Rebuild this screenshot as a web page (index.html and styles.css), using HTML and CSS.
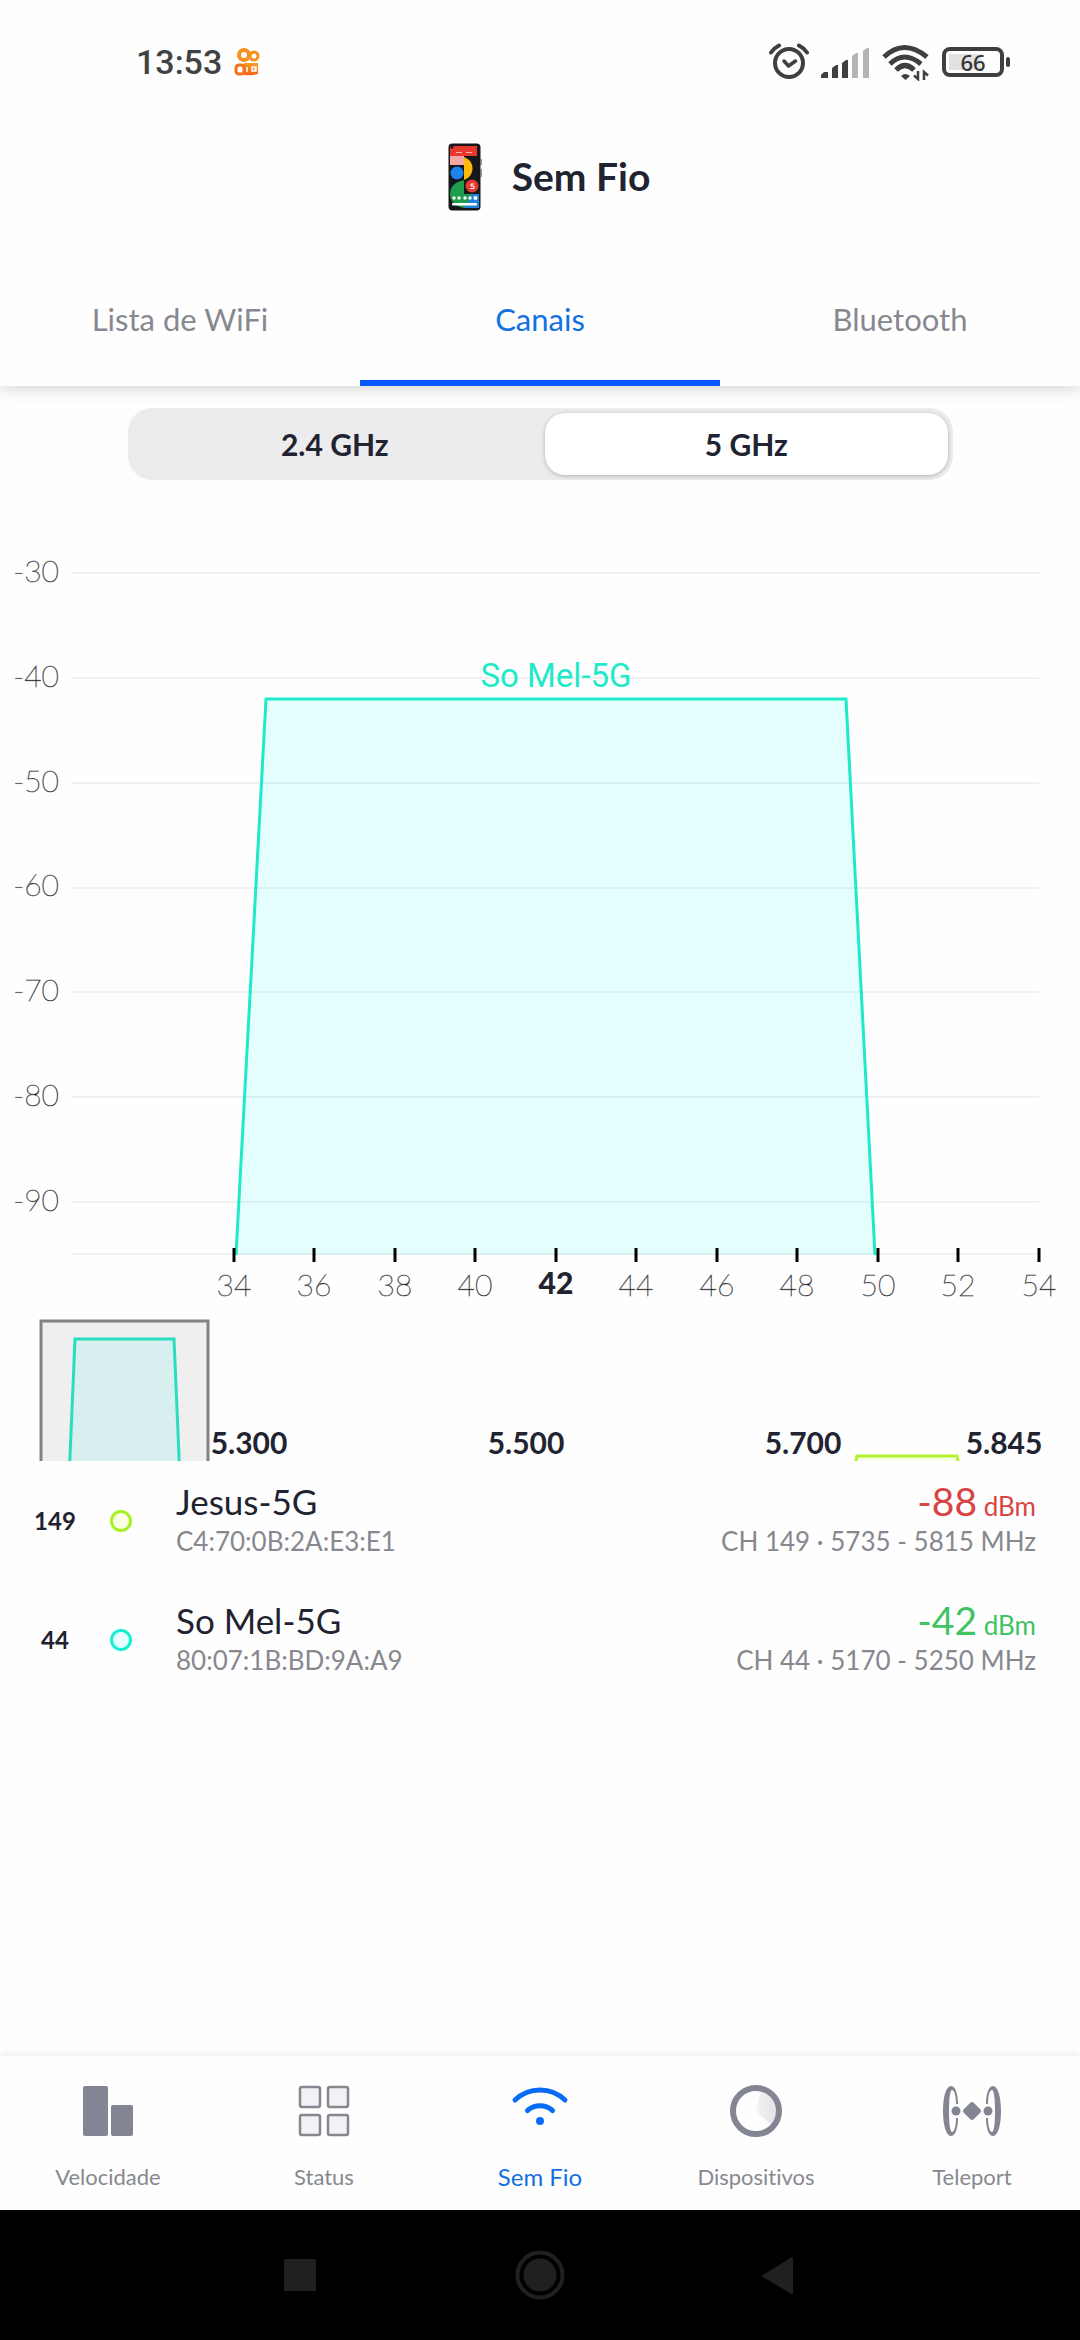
FILE: index.html
```html
<!DOCTYPE html>
<html lang="pt-BR">
<head>
    <meta charset="UTF-8" />
    <meta name="viewport" content="width=device-width, initial-scale=1" />
    <title>Sem Fio</title>
    <link rel="stylesheet" href="styles.css">
</head>
<body>
    <div class="status-bar">
        <span class="clock">13:53</span>
        <svg class="notif" width="26" height="28" viewBox="0 0 26 28">
            <defs>
                <linearGradient id="orange" x1="0" y1="0" x2="0" y2="1">
                    <stop offset="0" stop-color="#f99a1c" />
                    <stop offset="1" stop-color="#f4621b" />
                </linearGradient>
            </defs>
            <g fill="none" stroke="#f7901e">
                <circle cx="10" cy="7" r="5" stroke-width="4" />
                <circle cx="20" cy="8" r="4" stroke-width="3" />
            </g>
            <path d="M10 15h14v11q-8 2-14 1z" fill="url(#orange)" />
            <rect x="2" y="17" width="8" height="9" rx="3" fill="#fff" stroke="#f4701b" stroke-width="3" />
            <path d="M13 19v5M23 19h-5v4h4v-2h-2" fill="none" stroke="#fff" stroke-width="1.500" />
        </svg>
        <div class="status-icons">
            <svg width="40" height="38" viewBox="0 0 40 38" fill="none" stroke="#3f3f3f">
                <circle cx="20" cy="20" r="14" stroke-width="4" />
                <path d="M15 18l4.500 5 7-5" stroke-width="3.500" stroke-linecap="round" stroke-linejoin="round" />
                <path d="M2 9.500q3-4.500 8-7M38 9.500q-3-4.500-8-7" stroke-width="4" stroke-linecap="round" />
            </svg>
            <svg width="49" height="38" viewBox="0 0 49 38">
                <g fill="#3f3f3f">
                    <path d="M0 35v-3l3-3h4v6zM11 35V25l4-3h2v13zM21 35V20l4-3h2v18z" />
                </g>
                <path d="M31 35V13l4-3h2v25zM42 35V8l4-3h2v30z" fill="#b4b4b4" />
            </svg>
            <svg width="48" height="38" viewBox="0 0 48 38" fill="none" stroke="#3f3f3f" stroke-width="5">
                <path d="M2 14q20-19 43 0M8 21q14-14 31 0M14 27q9-9 18 0" />
                <path d="M19 33q4-4 9 0l-4.500 4z" fill="#3f3f3f" stroke="none" />
                <path d="M36 28v8l-4-3.500M42 37v-8l4 3.500" stroke-width="2.500" />
            </svg>
            <span class="battery"><span class="battery-text">66</span></span>
        </div>
    </div>

    <header class="title-bar">
        <svg width="70" height="70" viewBox="0 0 70 70">
            <rect x="18.500" y="1.500" width="32" height="67" rx="4" fill="#15171a" />
            <path d="M51 17v6M51 27v8" stroke="#777" stroke-width="1.500" />
            <rect x="20" y="4" width="27" height="10" fill="#e8382d" />
            <rect x="20" y="14" width="14" height="9" fill="#f6a7a2" />
            <path d="M34 15a12 12 0 0 1 0 23z" fill="#fcb90b" />
            <circle cx="27" cy="31" r="6.500" fill="#1a83ee" />
            <path d="M34 38v28q-14-3-14-14t14-14z" fill="#1c9e4d" />
            <path d="M34 52h15v14H34z" fill="#2381e0" />
            <path d="M34 52h7q-2 9-7 14z" fill="#1c9e4d" />
            <circle cx="42" cy="44" r="6.500" fill="#e53a31" />
            <path d="M44 42h-3v2h3v2.500h-4" fill="none" stroke="#fff" />
            <g fill="#fff">
                <circle cx="24" cy="56" r="1.700" /><circle cx="29" cy="56" r="1.700" /><circle cx="35" cy="56" r="1.700" />
                <circle cx="40" cy="56" r="1.700" /><circle cx="45.500" cy="56" r="2" />
                <rect x="22" y="61" width="25" height="2.500" rx="1" />
                <rect x="26" y="10" width="6" height="1" opacity=".6" /><rect x="36" y="10" width="6" height="1" opacity=".6" />
            </g>
            <circle cx="22" cy="5" r="1.500" fill="#15171a" />
        </svg>
        <h1>Sem Fio</h1>
    </header>

    <nav class="tabs">
        <button type="button" class="tab">Lista de WiFi</button>
        <button type="button" class="tab active">Canais</button>
        <button type="button" class="tab">Bluetooth</button>
    </nav>

    <main>
        <div class="segment">
            <label><input type="radio" name="band" value="2.4" /><span>2.4 GHz</span></label>
            <label><input type="radio" name="band" value="5" checked /><span>5 GHz</span></label>
        </div>

        <!-- Channel usage, dBm against channel number -->
        <svg class="chart" viewBox="0 0 1080 830">
            <path class="grid" d="M72 93H1039M72 198H1039M72 303H1039M72 408H1039M72 512H1039M72 617H1039M72 722H1039M72 774H1039" />
            <path class="area cyan" d="M236 775L266 219H846L875 775" />
            <path class="tick" d="M234 768v14M314 768v14M395 768v14M475 768v14M556 768v14M636 768v14M717 768v14M797 768v14M878 768v14M958 768v14M1039 768v14" />
            <text class="network" x="556" y="207">So Mel-5G</text>
            <g class="axis y-axis">
                <text x="59" y="102">-30</text>
                <text x="59" y="207">-40</text>
                <text x="59" y="312">-50</text>
                <text x="59" y="416">-60</text>
                <text x="59" y="521">-70</text>
                <text x="59" y="626">-80</text>
                <text x="59" y="731">-90</text>
            </g>
            <g class="axis x-axis">
                <text x="234" y="816">34</text>
                <text x="314" y="816">36</text>
                <text x="395" y="816">38</text>
                <text x="475" y="816">40</text>
                <text x="556" y="814" class="current">42</text>
                <text x="636" y="816">44</text>
                <text x="717" y="816">46</text>
                <text x="797" y="816">48</text>
                <text x="878" y="816">50</text>
                <text x="958" y="816">52</text>
                <text x="1039" y="816">54</text>
            </g>
        </svg>

        <!-- Whole band overview with the visible window -->
        <svg class="chart" viewBox="0 0 1080 151">
            <path class="area cyan" d="M69 170L75 29H174L180 170" />
            <rect class="window" x="41" y="11" width="167" height="200" />
            <path class="area lime" d="M854 160L857 146H957L960 160" />
            <g class="band">
                <text x="249" y="144">5.300</text>
                <text x="526" y="144">5.500</text>
                <text x="803" y="144">5.700</text>
                <text x="1004" y="144">5.845</text>
            </g>
        </svg>

        <ul class="networks">
            <li class="row">
                <span class="channel">149</span>
                <span class="dot lime"></span>
                <div class="info">
                    <div class="name">Jesus-5G</div>
                    <div class="sub">C4:70:0B:2A:E3:E1</div>
                </div>
                <div class="signal">
                    <div class="level bad">-88<small> dBm</small></div>
                    <div class="sub">CH 149 · 5735 - 5815 MHz</div>
                </div>
            </li>
            <li class="row">
                <span class="channel">44</span>
                <span class="dot cyan"></span>
                <div class="info">
                    <div class="name">So Mel-5G</div>
                    <div class="sub">80:07:1B:BD:9A:A9</div>
                </div>
                <div class="signal">
                    <div class="level good">-42<small> dBm</small></div>
                    <div class="sub">CH 44 · 5170 - 5250 MHz</div>
                </div>
            </li>
        </ul>
    </main>

    <nav class="bottom-nav">
        <a href="#velocidade">
            <svg width="60" height="56" viewBox="0 0 60 56" fill="#848592">
                <rect x="5" y="3" width="25" height="50" rx="2" />
                <rect x="33" y="22" width="22" height="31" rx="2" />
            </svg>
            <span>Velocidade</span>
        </a>
        <a href="#status">
            <svg width="60" height="56" viewBox="0 0 60 56" fill="#f1f2f5" stroke="#86878f" stroke-width="2.500">
                <rect x="6" y="4" width="20" height="20" rx="2" /><rect x="34" y="4" width="20" height="20" rx="2" />
                <rect x="6" y="32" width="20" height="20" rx="2" /><rect x="34" y="32" width="20" height="20" rx="2" />
            </svg>
            <span>Status</span>
        </a>
        <a href="#semfio" class="active">
            <svg width="60" height="56" viewBox="0 0 60 56" fill="none" stroke="#0a6cf5" stroke-width="5" stroke-linecap="round">
                <path d="M5 17a36 36 0 0 1 50 0M17.500 27.500a19 19 0 0 1 25 0" />
                <circle cx="30" cy="38" r="4" fill="#0a6cf5" stroke="none" />
            </svg>
            <span>Sem Fio</span>
        </a>
        <a href="#dispositivos">
            <svg width="60" height="56" viewBox="0 0 60 56">
                <defs>
                    <linearGradient id="sweep" x1="0" y1="0" x2="1" y2="0">
                        <stop offset="0" stop-color="#f4f4f6" />
                        <stop offset="1" stop-color="#e2e2e6" />
                    </linearGradient>
                </defs>
                <path d="M30 28L35 6A23 23 0 0 1 46 43z" fill="url(#sweep)" />
                <circle cx="30" cy="28" r="23" fill="none" stroke="#848592" stroke-width="6" />
            </svg>
            <span>Dispositivos</span>
        </a>
        <a href="#teleport">
            <svg width="60" height="56" viewBox="0 0 60 56" fill="#848592">
                <path d="M9 3C4 3 1 14 1 28s3 25 8 25c4 0 7-7 7-18h-2c0 9-2 14-4 14-2 0-3-9-3-21S8 7 10 7c2 0 4 5 4 14h2C16 10 13 3 9 3z" />
                <path d="M51 3c5 0 8 11 8 25s-3 25-8 25c-4 0-7-7-7-18h2c0 9 2 14 4 14 2 0 3-9 3-21S52 7 50 7c-2 0-4 5-4 14h-2c0-11 3-18 7-18z" />
                <circle cx="14" cy="28" r="4.500" /><circle cx="46" cy="28" r="4.500" />
                <path d="M28 20q2-2 4 0l6 6q2 2 0 4l-6 6q-2 2-4 0l-6-6q-2-2 0-4z" />
            </svg>
            <span>Teleport</span>
        </a>
    </nav>

    <div class="system-nav">
        <button type="button" aria-label="Recentes">
            <svg width="50" height="50" viewBox="0 0 50 50"><rect x="9" y="9" width="32" height="32" rx="1" fill="#202020" /></svg>
        </button>
        <button type="button" aria-label="Início">
            <svg width="50" height="50" viewBox="0 0 50 50">
                <circle cx="25" cy="25" r="22.500" fill="none" stroke="#202020" stroke-width="4" />
                <circle cx="25" cy="25" r="16.500" fill="#202020" />
            </svg>
        </button>
        <button type="button" aria-label="Voltar">
            <svg width="50" height="50" viewBox="0 0 50 50"><path d="M8 26L37 8v35z" fill="#202020" stroke="#202020" stroke-width="2" stroke-linejoin="round" /></svg>
        </button>
    </div>
</body>
</html>
```

FILE: styles.css
```css
:root {
    --ink: #212330;
    --grey: #87888f;
    --blue: #1271e0;
}
* { box-sizing: border-box; }
body {
    margin: 0;
    min-height: 100vh;
    display: flex;
    flex-direction: column;
    font-family: Lato, "Liberation Sans", sans-serif;
    font-variant-ligatures: none;
    color: var(--ink);
    background: #fefefe;
}
button {
    border: 0;
    background: none;
    font: inherit;
    color: inherit;
    padding: 0;
}
svg { display: block; }

/* Status bar */
.status-bar {
    height: 124px;
    padding: 0 76px 0 136px;
    display: flex;
    align-items: center;
    gap: 12px;
}
.clock {
    font-family: Roboto, sans-serif;
    font-weight: 500;
    font-size: 34px;
    color: #424242;
}
.status-icons {
    margin-left: auto;
    display: flex;
    align-items: center;
    gap: 12px;
}
.battery {
    position: relative;
    width: 62px;
    height: 30px;
    border: 4px solid #3f3f3f;
    border-radius: 8px;
    background: linear-gradient(#e2e2e2, #e2e2e2) 3px 3px / 32px 16px no-repeat;
    display: flex;
    align-items: center;
    justify-content: center;
}
.battery::after {
    content: "";
    position: absolute;
    right: -10px;
    top: 6px;
    width: 4px;
    height: 10px;
    border-radius: 2px;
    background: #3f3f3f;
}
.battery-text {
    font-family: "Noto Sans", sans-serif;
    font-weight: 500;
    font-size: 22px;
    line-height: 22px;
    color: #333;
}

/* Header and tabs */
.title-bar {
    height: 106px;
    display: flex;
    align-items: center;
    justify-content: center;
    gap: 12px;
}
h1 {
    margin: 0;
    padding-bottom: 2px;
    font-size: 39px;
    font-weight: 700;
}
.tabs {
    display: flex;
    height: 156px;
    box-shadow: 0 2px 16px rgba(0,0,0,0.18);
    clip-path: inset(0 0 -24px 0);
}
.tab {
    flex: 1;
    padding-top: 28px;
    border-bottom: 6px solid transparent;
    font-size: 31px;
    color: var(--grey);
}
.tab.active {
    color: var(--blue);
    border-color: #0a57ff;
}

main { flex: 1; }

/* Band switch */
.segment {
    margin: 22px 127px 0 128px;
    height: 72px;
    padding: 5px;
    display: flex;
    gap: 8px;
    background: #ececee;
    border-radius: 24px;
}
.segment label {
    flex: 1;
    display: flex;
}
.segment input {
    appearance: none;
    margin: 0;
}
.segment span {
    flex: 1;
    display: flex;
    align-items: center;
    justify-content: center;
    font-size: 30px;
    font-weight: 700;
    border-radius: 20px;
}
.segment input:checked + span {
    background: #fff;
    box-shadow: 0 1px 4px rgba(0,0,0,0.25);
}

/* Charts */
.chart {
    width: 100%;
    height: auto;
}
.grid { stroke: #f0f0f1; stroke-width: 2; }
.tick { stroke: #000; stroke-width: 3; }
.area { stroke-width: 3; }
.area.cyan { stroke: #1eeaca; fill: rgba(0,255,255,0.1); }
.area.lime { stroke: #b4f22c; fill: rgba(180,255,0,0.1); }
.window {
    fill: rgba(128,128,128,0.12);
    stroke: #828282;
    stroke-width: 3;
}
.network {
    font-family: Roboto, sans-serif;
    font-size: 33px;
    fill: #1eeaca;
    text-anchor: middle;
}
.axis {
    font-size: 30px;
    font-weight: 100;
    fill: #000;
    stroke: rgba(0,0,0,0.45);
    stroke-width: 1;
}
.y-axis { text-anchor: end; }
.x-axis { text-anchor: middle; }
.current {
    font-weight: 900;
    fill: var(--ink);
    stroke: none;
}
.band {
    font-size: 30px;
    font-weight: 700;
    fill: var(--ink);
    text-anchor: middle;
}

/* Network list */
.networks {
    list-style: none;
    margin: 0;
    padding: 0;
}
.row {
    min-height: 119px;
    padding: 0 44px 0 20px;
    display: flex;
    align-items: center;
}
.channel {
    width: 70px;
    text-align: center;
    font-size: 24px;
    font-weight: 700;
}
.dot {
    width: 22px;
    height: 22px;
    margin: 0 44px 0 20px;
    border: 3px solid;
    border-radius: 50%;
}
.dot.lime { border-color: #a6f21c; background: #f8ffe4; }
.dot.cyan { border-color: #12f0cf; background: #e5fffe; }
.info { flex: 1; }
.name { font-size: 35px; line-height: 40px; }
.sub {
    font-size: 26px;
    line-height: 40px;
    color: var(--grey);
}
.signal { text-align: right; }
.level { font-size: 39px; line-height: 40px; }
.level small { font-size: 26px; line-height: 26px; }
.bad { color: #d84444; }
.good { color: #3fc364; }

/* Bottom navigation */
.bottom-nav {
    height: 154px;
    display: flex;
    box-shadow: 0 0 10px rgba(0,0,0,0.1);
    background: #fefefe;
}
.bottom-nav a {
    flex: 1;
    display: flex;
    flex-direction: column;
    align-items: center;
    padding-top: 27px;
    gap: 22px;
    font-size: 22px;
    line-height: 32px;
    color: var(--grey);
    text-decoration: none;
}
.bottom-nav .active {
    color: var(--blue);
    font-size: 24px;
}

/* Android buttons */
.system-nav {
    height: 130px;
    background: #000;
    display: flex;
    align-items: center;
    justify-content: center;
    gap: 190px;
}
```
